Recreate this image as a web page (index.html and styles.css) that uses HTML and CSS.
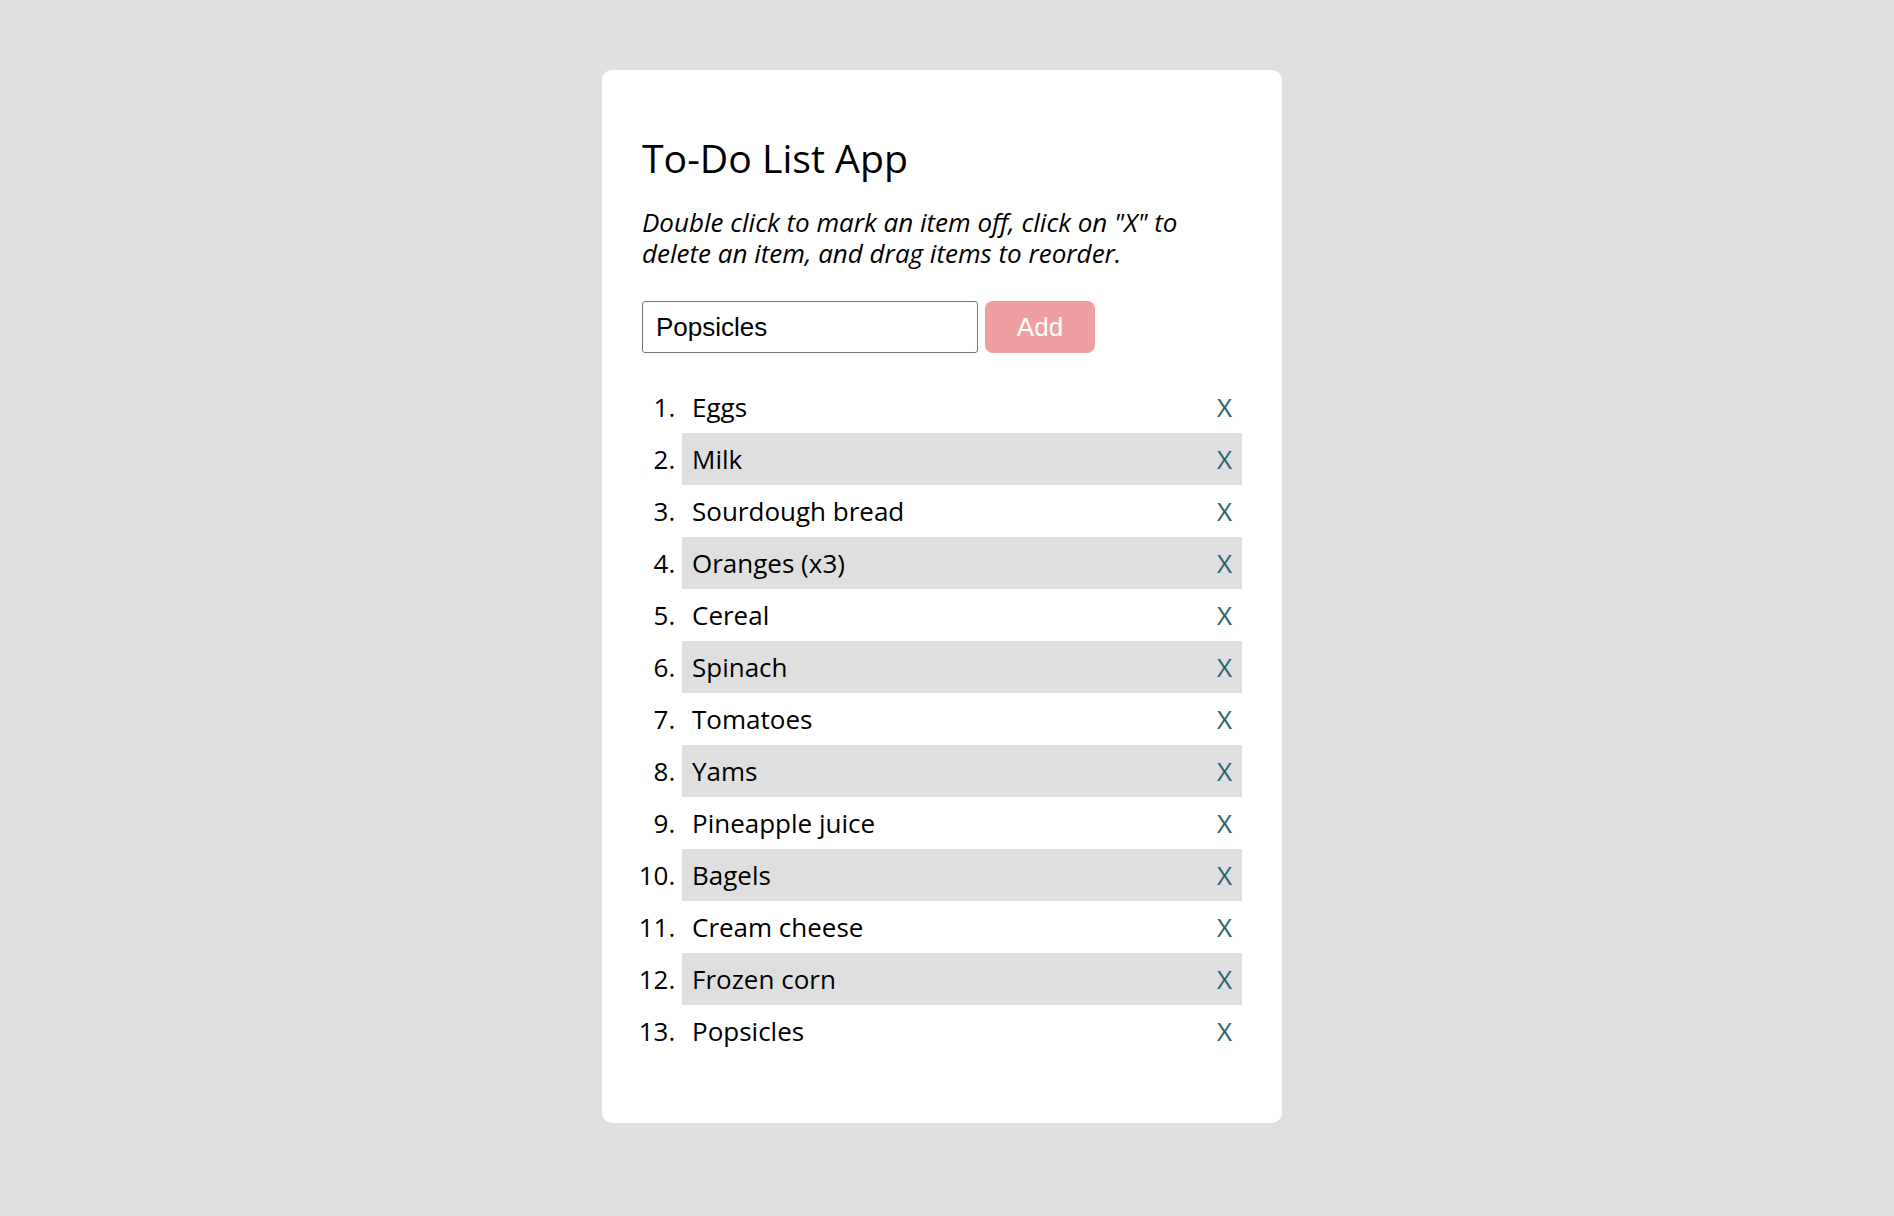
FILE: index.html
```html
<!DOCTYPE html>
<html lang="en">
<head>
<meta charset="utf-8">
<title>To-Do List App</title>
<link rel="stylesheet" href="styles.css">
</head>
<body>
<main class="page">
  <section class="card">
    <h1 class="title">To-Do List App</h1>
    <p class="hint">Double click to mark an item off, click on "X" to delete an item, and drag items to reorder.</p>
    <form class="add-form">
      <input class="add-input" type="text" value="Popsicles">
      <button class="add-btn" type="button">Add</button>
    </form>
    <ol class="todo-list">
      <li class="todo"><div class="todo-row"><span class="todo-text">Eggs</span><span class="todo-del">X</span></div></li>
      <li class="todo"><div class="todo-row"><span class="todo-text">Milk</span><span class="todo-del">X</span></div></li>
      <li class="todo"><div class="todo-row"><span class="todo-text">Sourdough bread</span><span class="todo-del">X</span></div></li>
      <li class="todo"><div class="todo-row"><span class="todo-text">Oranges (x3)</span><span class="todo-del">X</span></div></li>
      <li class="todo"><div class="todo-row"><span class="todo-text">Cereal</span><span class="todo-del">X</span></div></li>
      <li class="todo"><div class="todo-row"><span class="todo-text">Spinach</span><span class="todo-del">X</span></div></li>
      <li class="todo"><div class="todo-row"><span class="todo-text">Tomatoes</span><span class="todo-del">X</span></div></li>
      <li class="todo"><div class="todo-row"><span class="todo-text">Yams</span><span class="todo-del">X</span></div></li>
      <li class="todo"><div class="todo-row"><span class="todo-text">Pineapple juice</span><span class="todo-del">X</span></div></li>
      <li class="todo"><div class="todo-row"><span class="todo-text">Bagels</span><span class="todo-del">X</span></div></li>
      <li class="todo"><div class="todo-row"><span class="todo-text">Cream cheese</span><span class="todo-del">X</span></div></li>
      <li class="todo"><div class="todo-row"><span class="todo-text">Frozen corn</span><span class="todo-del">X</span></div></li>
      <li class="todo"><div class="todo-row"><span class="todo-text">Popsicles</span><span class="todo-del">X</span></div></li>
    </ol>
  </section>
</main>
</body>
</html>
```

FILE: styles.css
```css
html, body {
  margin: 0;
  padding: 0;
  background: #dfdfdf;
}

body {
  font-family: "Open Sans", "Noto Sans", sans-serif;
  color: #000;
}

.page {
  padding: 70px 10px 0 0;
}

.card {
  box-sizing: border-box;
  width: 680px;
  margin: 0 auto;
  background: #fff;
  border-radius: 10px;
  padding: 40px 40px 40px 40px;
}

.title {
  margin: 21px 0 0;
  font-size: 39.2px;
  font-weight: 400;
  line-height: 54px;
}

.hint {
  margin: 21.8px 0 0;
  font-size: 26px;
  font-style: italic;
  line-height: 31px;
}

.add-form {
  display: flex;
  align-items: flex-start;
  gap: 7px;
  margin: 32.4px 0 0;
}

.add-input {
  box-sizing: border-box;
  width: 336px;
  height: 52px;
  margin: 0;
  padding: 0 13px;
  border: 1px solid #767676;
  border-radius: 3px;
  font-family: "Liberation Sans", Arial, sans-serif;
  font-size: 26px;
  color: #000;
  background: #fff;
}

.add-btn {
  box-sizing: border-box;
  width: 110px;
  height: 52px;
  margin: 0;
  padding: 0;
  border: none;
  border-radius: 8px;
  background: #ef9f9f;
  color: #fff;
  font-family: "Liberation Sans", Arial, sans-serif;
  font-size: 26px;
}

.todo-list {
  margin: 28px 0 26px;
  padding: 0 0 0 40px;
  font-size: 26px;
  line-height: 52px;
}

.todo {
  padding: 0 10px;
}

.todo:nth-child(even) {
  background: #dfdfdf;
}

.todo-row {
  display: flex;
  justify-content: space-between;
  align-items: baseline;
  height: 52px;
}

.todo-del {
  color: #2b6274;
}
```
